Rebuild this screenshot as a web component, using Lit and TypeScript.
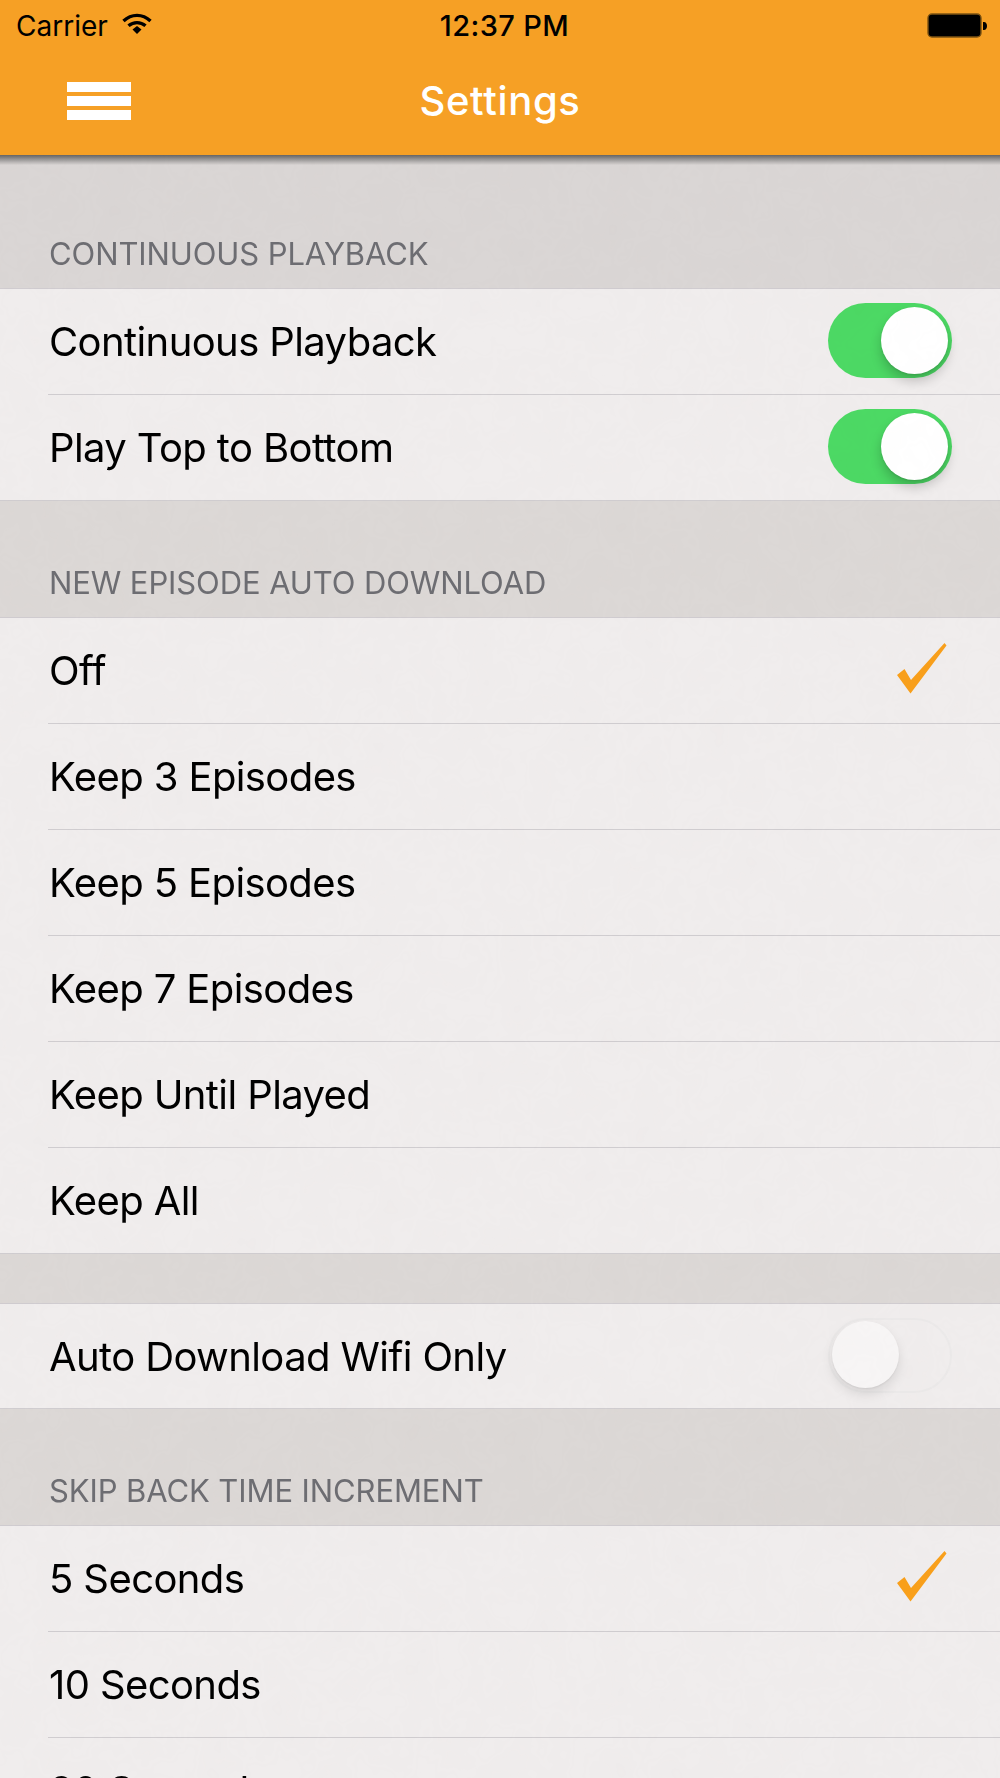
import { LitElement, html, css, nothing } from "lit";
import { customElement } from "lit/decorators.js";

type Row = { label: string; toggle?: "on" | "off"; check?: boolean };
type Section = { title?: string; compact?: boolean; rows: Row[] };

const SECTIONS: Section[] = [
  { title: "CONTINUOUS PLAYBACK", rows: [
    { label: "Continuous Playback", toggle: "on" },
    { label: "Play Top to Bottom", toggle: "on" },
  ]},
  { title: "NEW EPISODE AUTO DOWNLOAD", rows: [
    { label: "Off", check: true },
    { label: "Keep 3 Episodes" },
    { label: "Keep 5 Episodes" },
    { label: "Keep 7 Episodes" },
    { label: "Keep Until Played" },
    { label: "Keep All" },
  ]},
  { compact: true, rows: [{ label: "Auto Download Wifi Only", toggle: "off" }] },
  { title: "SKIP BACK TIME INCREMENT", rows: [
    { label: "5 Seconds", check: true },
    { label: "10 Seconds" },
    { label: "30 Seconds" },
  ]},
];

@customElement("app-root")
export class AppRoot extends LitElement {
  static styles = css`
    :host {
      display: block;
      position: relative;
      width: 1000px;
      height: 1778px;
      overflow: hidden;
      font-family: Inter, "Liberation Sans", sans-serif;
      background: #dcd8d6;
      color: #000;
    }
    .nav {
      position: relative;
      z-index: 2;
      height: 155px;
      background: #f6a025;
      display: flex;
      flex-direction: column;
    }
    .nav::after {
      content: "";
      position: absolute;
      left: 0;
      right: 0;
      top: 100%;
      height: 10px;
      background: linear-gradient(180deg, rgba(80, 80, 80, 0.85), rgba(120, 120, 120, 0));
    }
    .status {
      height: 50px;
      display: grid;
      grid-template-columns: 1fr auto 1fr;
      align-items: center;
      padding: 0 16px;
      font-size: 28px;
      line-height: 50px;
    }
    .status-left { display: flex; align-items: center; gap: 14px; }
    .status-left svg { margin-top: -4px; }
    .time { font-weight: 500; font-size: 29px; letter-spacing: 0.4px; margin-left: 9px; padding-top: 1px; }
    .status-right { display: flex; justify-content: flex-end; margin-right: -3px; }
    .bar-row { position: relative; flex: 1; display: flex; align-items: center; justify-content: center; }
    .title { color: #fff; font-size: 40px; font-weight: 500; letter-spacing: 0.65px; margin-top: -4px; }
    .burger {
      position: absolute;
      left: 67px;
      top: 32px;
      width: 64px;
      display: flex;
      flex-direction: column;
      gap: 4px;
    }
    .burger i { display: block; height: 10px; background: #fff; }
    .header {
      height: 116px;
      box-sizing: border-box;
      padding: 0 0 17px 49px;
      display: flex;
      align-items: flex-end;
      font-size: 31px;
      letter-spacing: -0.1px;
      line-height: 34px;
      color: #6d6d72;
    }
    .header.first { height: 133px; background: #dad6d5; }
    .header.gap { height: 49px; padding: 0; }
    .rows {
      background: #f0eded;
      border-top: 1px solid #d0ccd0;
    }
    .row {
      position: relative;
      height: 105px;
      display: flex;
      align-items: center;
      justify-content: space-between;
      padding: 0 48px 0 49px;
      font-size: 40px;
      letter-spacing: -0.6px;
      border-bottom: 1px solid #d0cdd0;
    }
    .rows.compact .row { height: 104px; }
    .row.inset { border-bottom: none; padding-bottom: 1px; }
    .row.inset::after {
      content: "";
      position: absolute;
      left: 48px;
      right: 0;
      bottom: 0;
      height: 1px;
      background: #d0cdd0;
    }
    .label { white-space: nowrap; }
    .toggle {
      position: relative;
      width: 124px;
      height: 75px;
      border-radius: 38px;
      box-sizing: border-box;
      margin-bottom: 3px;
    }
    .toggle.on { background: #4cd964; }
    .toggle.off { border: 2px solid #ebe9e9; margin-bottom: 2px; }
    .knob {
      position: absolute;
      top: 4px;
      width: 67px;
      height: 67px;
      border-radius: 50%;
      background: #fff;
      box-shadow: 0 7px 12px rgba(0, 0, 0, 0.2), 0 1px 2px rgba(0, 0, 0, 0.1);
    }
    .toggle.on .knob { right: 4px; }
    .toggle.off .knob {
      left: 2px;
      top: 1px;
      background: #f7f5f5;
      box-shadow: 0 6px 12px rgba(0, 0, 0, 0.1), 0 1px 2px rgba(0, 0, 0, 0.06);
    }
    .check { display: block; width: 50px; height: 51px; margin: 0 5px 5px 0; }
    .grain {
      position: absolute;
      left: 0;
      top: 155px;
      width: 1000px;
      height: 1623px;
      pointer-events: none;
      mix-blend-mode: multiply;
      opacity: 0.02;
    }
  `;

  private wifi() {
    return html`<svg width="30" height="22" viewBox="0 0 30 22" fill="none" stroke="#000">
      <path d="M1.5 8C9.5 0.5 20.5 0.5 28.5 8" stroke-width="3.4" />
      <path d="M6.5 12.8C11.5 8.5 18.5 8.5 23.5 12.8" stroke-width="3.4" />
      <path d="M10.5 16.5L15 13L19.5 16.5L15 21Z" fill="#000" stroke="none" />
    </svg>`;
  }

  private battery() {
    return html`<svg width="60" height="26" viewBox="0 0 60 26">
      <rect x="1" y="1" width="53" height="23" rx="4" fill="#000" stroke="#7d5312" stroke-width="1.4" />
      <path d="M56 9h1c2 0 3 2 3 4s-1 4-3 4h-1z" fill="#000" />
    </svg>`;
  }

  private check() {
    return html`<svg class="check" viewBox="897 643 50 51">
      <path d="M897 675L904.5 669L911 680L944.5 643L946.5 645.5L910.5 693.5Z" fill="#f9a01b" />
    </svg>`;
  }

  private row(r: Row, i: number, n: number) {
    return html`<div class="row ${i < n - 1 ? "inset" : ""}">
      <span class="label">${r.label}</span>
      ${r.toggle ? html`<span class="toggle ${r.toggle}"><span class="knob"></span></span>` : nothing}
      ${r.check ? this.check() : nothing}
    </div>`;
  }

  render() {
    return html`
      <div class="nav">
        <div class="status">
          <div class="status-left"><span>Carrier</span>${this.wifi()}</div>
          <div class="time">12:37 PM</div>
          <div class="status-right">${this.battery()}</div>
        </div>
        <div class="bar-row">
          <div class="burger"><i></i><i></i><i></i></div>
          <div class="title">Settings</div>
        </div>
      </div>
      ${SECTIONS.map((s, idx) => html`
        <div class="header ${idx === 0 ? "first" : ""} ${s.title ? "" : "gap"}">${s.title ?? ""}</div>
        <div class="rows ${s.compact ? "compact" : ""}">${s.rows.map((r, i) => this.row(r, i, s.rows.length))}</div>
      `)}
      <svg class="grain" width="1000" height="1623">
        <filter id="grain-filter">
          <feTurbulence type="fractalNoise" baseFrequency="0.03" numOctaves="3" seed="4" />
          <feColorMatrix values="0 0 0 0 0.45  0 0 0 0 0.4  0 0 0 0 0.38  1.4 0 0 0 -0.3" />
        </filter>
        <rect width="1000" height="1623" filter="url(#grain-filter)" />
      </svg>
    `;
  }
}
